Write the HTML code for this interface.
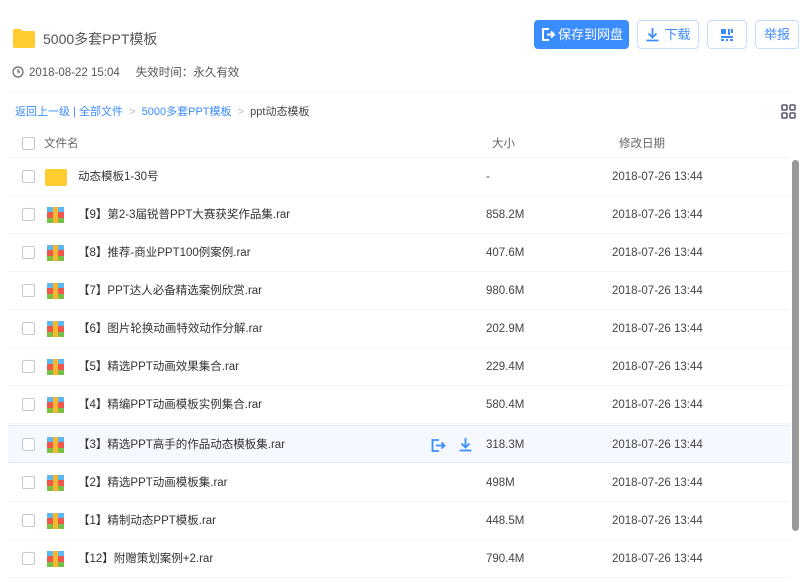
<!DOCTYPE html>
<html><head><meta charset="utf-8"><style>
*{margin:0;padding:0;box-sizing:border-box}
body{width:800px;height:576px;overflow:hidden;background:#fff;font-family:"Liberation Sans","Noto Sans CJK SC",sans-serif;font-size:12px;line-height:14px;color:#333;position:relative}
.abs{position:absolute}
.btn{position:absolute;top:20px;height:29px;border:1px solid #c5dcff;border-radius:4px;color:#3b8cff;font-size:13px;display:flex;align-items:center;justify-content:center;background:#fff}
.row{position:absolute;left:8px;width:782px;height:38px;border-bottom:1px solid #f1f4f9}
.cb{position:absolute;left:14px;top:12px;width:13px;height:13px;border:1px solid #c3c8d0;border-radius:2px;background:#fff}
.nm{position:absolute;left:70px;top:12px;font-size:11.5px;color:#333;line-height:14px}
.sz{position:absolute;left:478px;top:12px;color:#444;font-size:11.5px}
.dt{position:absolute;left:604px;top:12px;color:#444;font-size:11.5px}
.rar{position:absolute;left:39px;top:11px;width:17px;height:16px}
</style></head><body>
<div class="abs" style="left:13px;top:31px;width:22px;height:17px;background:#ffcb2f;border-radius:2px"></div>
<div class="abs" style="left:13px;top:29px;width:9px;height:4px;background:#ffcb2f;border-radius:2px 2px 0 0"></div>
<div class="abs" style="left:43px;top:31px;font-size:14px;line-height:16px;color:#555">5000多套PPT模板</div>
<svg class="abs" style="left:12px;top:66px" width="12" height="12" viewBox="0 0 12 12"><circle cx="6" cy="6" r="5" fill="none" stroke="#666" stroke-width="1.2"/><path d="M6 3v3h2" fill="none" stroke="#666" stroke-width="1.2"/></svg>
<div class="abs" style="left:29px;top:66px;color:#555;font-size:11.5px">2018-08-22 15:04 &nbsp;&nbsp;&nbsp; 失效时间：永久有效</div>
<div class="btn" style="left:534px;width:95px;background:#3b8cff;border-color:#3b8cff;color:#fff"><svg width="15" height="15" viewBox="0 0 15 15" style="margin-right:3px"><path d="M9 2H3v11h6M7 7.5h7M11 4.5l3 3-3 3" fill="none" stroke="#fff" stroke-width="2"/></svg>保存到网盘</div>
<div class="btn" style="left:637px;width:62px"><svg width="15" height="15" viewBox="0 0 15 15" style="margin-right:4px"><path d="M7.5 1v9M3.5 6.5l4 4 4-4M1.5 13.5h12" fill="none" stroke="#3b8cff" stroke-width="1.8"/></svg>下载</div>
<div class="btn" style="left:707px;width:40px"><svg width="14" height="14" viewBox="0 0 14 14"><path d="M1 1h5v5H1zM8 1h2v6H8zM11 1h2v4h-2zM1 8h12v2H1zM1 11h3v2H1zM6 11h2v2H6zM10 11h3v2h-3z" fill="#3b8cff"/></svg></div>
<div class="btn" style="left:755px;width:44px">举报</div>
<div class="abs" style="left:8px;top:92px;width:782px;height:1px;background:#f1f4f9"></div>
<div class="abs" style="left:15px;top:105px;color:#3b8cff;font-size:11px">返回上一级 | 全部文件 <span style="color:#bbb">&nbsp;&gt;&nbsp;</span> 5000多套PPT模板 <span style="color:#bbb">&nbsp;&gt;&nbsp;</span> <span style="color:#444">ppt动态模板</span></div>
<svg class="abs" style="left:781px;top:104px" width="15" height="15" viewBox="0 0 15 15"><g fill="none" stroke="#555c6b" stroke-width="1.6"><rect x="1" y="1" width="5" height="5" rx="1"/><rect x="9" y="1" width="5" height="5" rx="1"/><rect x="1" y="9" width="5" height="5" rx="1"/><rect x="9" y="9" width="5" height="5" rx="1"/></g></svg>
<div class="row" style="top:124px;height:34px"><div class="cb" style="top:13px"></div><div class="nm" style="left:36px;top:13px;color:#666">文件名</div><div class="sz" style="left:484px;top:13px;color:#666">大小</div><div class="dt" style="left:611px;top:13px;color:#666">修改日期</div></div>

<div class="row" style="top:158px"><div class="cb"></div><div class="abs" style="left:37px;top:11px;width:22px;height:17px;background:#ffcb2f;border-radius:2px"></div><div class="nm">动态模板1-30号</div><div class="sz" style="left:478px">-</div><div class="dt">2018-07-26 13:44</div></div>

<div class="row" style="top:196px"><div class="cb"></div><svg class="rar" viewBox="0 0 17 16"><rect width="17" height="5" fill="#5cb8f0"/><rect y="5" width="17" height="6" fill="#f0564a"/><rect y="11" width="17" height="5" fill="#7bc043"/><rect x="6" width="5" height="16" fill="#f5b731"/></svg><div class="nm">【9】第2-3届锐普PPT大赛获奖作品集.rar</div><div class="sz">858.2M</div><div class="dt">2018-07-26 13:44</div></div>
<div class="row" style="top:234px"><div class="cb"></div><svg class="rar" viewBox="0 0 17 16"><rect width="17" height="5" fill="#5cb8f0"/><rect y="5" width="17" height="6" fill="#f0564a"/><rect y="11" width="17" height="5" fill="#7bc043"/><rect x="6" width="5" height="16" fill="#f5b731"/></svg><div class="nm">【8】推荐-商业PPT100例案例.rar</div><div class="sz">407.6M</div><div class="dt">2018-07-26 13:44</div></div>
<div class="row" style="top:272px"><div class="cb"></div><svg class="rar" viewBox="0 0 17 16"><rect width="17" height="5" fill="#5cb8f0"/><rect y="5" width="17" height="6" fill="#f0564a"/><rect y="11" width="17" height="5" fill="#7bc043"/><rect x="6" width="5" height="16" fill="#f5b731"/></svg><div class="nm">【7】PPT达人必备精选案例欣赏.rar</div><div class="sz">980.6M</div><div class="dt">2018-07-26 13:44</div></div>
<div class="row" style="top:310px"><div class="cb"></div><svg class="rar" viewBox="0 0 17 16"><rect width="17" height="5" fill="#5cb8f0"/><rect y="5" width="17" height="6" fill="#f0564a"/><rect y="11" width="17" height="5" fill="#7bc043"/><rect x="6" width="5" height="16" fill="#f5b731"/></svg><div class="nm">【6】图片轮换动画特效动作分解.rar</div><div class="sz">202.9M</div><div class="dt">2018-07-26 13:44</div></div>
<div class="row" style="top:348px"><div class="cb"></div><svg class="rar" viewBox="0 0 17 16"><rect width="17" height="5" fill="#5cb8f0"/><rect y="5" width="17" height="6" fill="#f0564a"/><rect y="11" width="17" height="5" fill="#7bc043"/><rect x="6" width="5" height="16" fill="#f5b731"/></svg><div class="nm">【5】精选PPT动画效果集合.rar</div><div class="sz">229.4M</div><div class="dt">2018-07-26 13:44</div></div>
<div class="row" style="top:386px"><div class="cb"></div><svg class="rar" viewBox="0 0 17 16"><rect width="17" height="5" fill="#5cb8f0"/><rect y="5" width="17" height="6" fill="#f0564a"/><rect y="11" width="17" height="5" fill="#7bc043"/><rect x="6" width="5" height="16" fill="#f5b731"/></svg><div class="nm">【4】精编PPT动画模板实例集合.rar</div><div class="sz">580.4M</div><div class="dt">2018-07-26 13:44</div></div>
<div class="row" style="top:425px;background:#f5f9ff;border-top:1px solid #e3edfb;border-bottom:1px solid #e3edfb"><div class="cb"></div><svg class="rar" viewBox="0 0 17 16"><rect width="17" height="5" fill="#5cb8f0"/><rect y="5" width="17" height="6" fill="#f0564a"/><rect y="11" width="17" height="5" fill="#7bc043"/><rect x="6" width="5" height="16" fill="#f5b731"/></svg><div class="nm">【3】精选PPT高手的作品动态模板集.rar</div>
<svg class="abs" style="left:422px;top:12px" width="16" height="15" viewBox="0 0 16 15"><path d="M9 2H2.5v11H9M6 7.5h8.5M11.5 4.5l3 3-3 3" fill="none" stroke="#3b8cff" stroke-width="1.8"/></svg>
<svg class="abs" style="left:450px;top:11px" width="15" height="15" viewBox="0 0 15 15"><path d="M7.5 1v9M3.5 6.5l4 4 4-4M1.5 13.5h12" fill="none" stroke="#3b8cff" stroke-width="1.8"/></svg>
<div class="sz">318.3M</div><div class="dt">2018-07-26 13:44</div></div>
<div class="row" style="top:464px"><div class="cb"></div><svg class="rar" viewBox="0 0 17 16"><rect width="17" height="5" fill="#5cb8f0"/><rect y="5" width="17" height="6" fill="#f0564a"/><rect y="11" width="17" height="5" fill="#7bc043"/><rect x="6" width="5" height="16" fill="#f5b731"/></svg><div class="nm">【2】精选PPT动画模板集.rar</div><div class="sz">498M</div><div class="dt">2018-07-26 13:44</div></div>
<div class="row" style="top:502px"><div class="cb"></div><svg class="rar" viewBox="0 0 17 16"><rect width="17" height="5" fill="#5cb8f0"/><rect y="5" width="17" height="6" fill="#f0564a"/><rect y="11" width="17" height="5" fill="#7bc043"/><rect x="6" width="5" height="16" fill="#f5b731"/></svg><div class="nm">【1】精制动态PPT模板.rar</div><div class="sz">448.5M</div><div class="dt">2018-07-26 13:44</div></div>
<div class="row" style="top:540px"><div class="cb"></div><svg class="rar" viewBox="0 0 17 16"><rect width="17" height="5" fill="#5cb8f0"/><rect y="5" width="17" height="6" fill="#f0564a"/><rect y="11" width="17" height="5" fill="#7bc043"/><rect x="6" width="5" height="16" fill="#f5b731"/></svg><div class="nm">【12】附赠策划案例+2.rar</div><div class="sz">790.4M</div><div class="dt">2018-07-26 13:44</div></div>
<div class="abs" style="left:792px;top:160px;width:7px;height:371px;background:#999;border-radius:4px"></div>
</body></html>
